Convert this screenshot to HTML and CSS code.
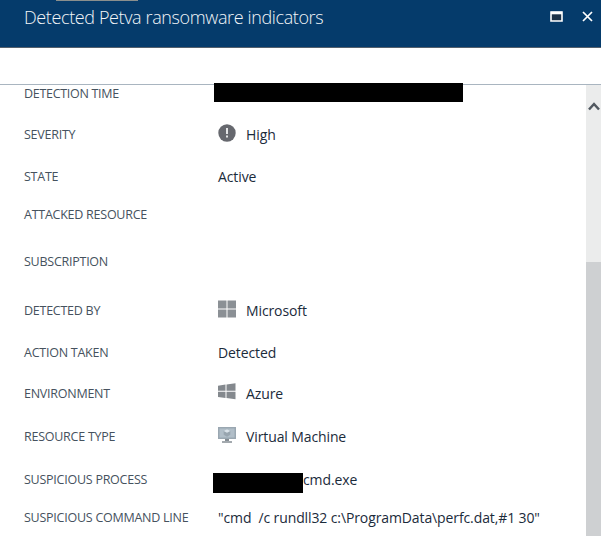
FILE: index.html
```html
<!DOCTYPE html>
<html lang="en">
<head>
<meta charset="utf-8">
<title>Detected Petva ransomware indicators</title>
<link rel="stylesheet" href="styles.css">
</head>
<body>
<div class="blade">
  <header class="header">
    <i class="tab-edge"></i>
    <h1>Detected Petva ransomware indicators</h1>
    <svg class="maximize" width="13" height="11" viewBox="0 0 13 11"><path d="M1 1h11v9H1z" fill="#1c3349" stroke="#fff" stroke-width="1.6"/><path d="M1 2h11" stroke="#fff" stroke-width="2.6"/></svg>
    <svg class="close" width="11" height="11" viewBox="0 0 11 11"><path d="M1 1l9 9M10 1l-9 9" stroke="#fff" stroke-width="1.7"/></svg>
  </header>
  <div class="toolbar"></div>
  <div class="body">
    <dl class="details">
      <div class="row r1"><dt>DETECTION TIME</dt><dd><i class="redacted long"></i></dd></div>
      <div class="row r2"><dt>SEVERITY</dt><dd><svg class="icon" width="18" height="18" viewBox="0 0 18 18"><circle cx="9" cy="9" r="8.7" fill="#66686e"/><path d="M9 4v6M9 11.6v2" stroke="#e4e5e6" stroke-width="2"/></svg>High</dd></div>
      <div class="row r3"><dt>STATE</dt><dd>Active</dd></div>
      <div class="row r4"><dt>ATTACKED RESOURCE</dt><dd></dd></div>
      <div class="row r5"><dt>SUBSCRIPTION</dt><dd></dd></div>
      <div class="row r6"><dt>DETECTED BY</dt><dd><svg class="icon" width="18" height="18" viewBox="0 0 18 18"><path d="M0 0.5h8.5v8H0zM9.5 0.5H18v8H9.5zM0 9.5h8.5v8H0zM9.5 9.5H18v8H9.5z" fill="#8b9095"/></svg>Microsoft</dd></div>
      <div class="row r7"><dt>ACTION TAKEN</dt><dd>Detected</dd></div>
      <div class="row r8"><dt>ENVIRONMENT</dt><dd><svg class="icon" width="18" height="18" viewBox="0 0 18 18"><path d="M0 2.7L7.5 1.6v6.2H0zM8.5 1.5L17.5.2v7.6h-9zM0 8.8h7.5V15L0 13.9zM8.5 8.8h9v7.5l-9-1.3z" fill="#84898e"/></svg>Azure</dd></div>
      <div class="row r9"><dt>RESOURCE TYPE</dt><dd><svg class="icon" width="18" height="18" viewBox="0 0 18 18"><path d="M0 1h18v12H0z" fill="#9aa7b1"/><path d="M1.5 2.5h15v9h-15z" fill="#b1bec8"/><path d="M9 3.2l3.3 1.8v3.8L9 10.7 5.7 8.8V5z" fill="#98a5af"/><path d="M9 3.2L12.3 5 9 6.8 5.7 5z" fill="#dae3ea"/><path d="M7 13h4v2H7zM4 15.2h10v1.5H4z" fill="#858d94"/></svg>Virtual Machine</dd></div>
      <div class="row r10"><dt>SUSPICIOUS PROCESS</dt><dd><i class="redacted short"></i>cmd.exe</dd></div>
      <div class="row r11"><dt>SUSPICIOUS COMMAND LINE</dt><dd>"cmd&nbsp; /c rundll32 c:\ProgramData\perfc.dat,#1 30"</dd></div>
    </dl>
    <div class="scrollbar">
      <svg class="up" width="12" height="10" viewBox="0 0 12 10"><path d="M1 8.5L6 3l5 5.5" fill="none" stroke="#515860" stroke-width="2.5"/></svg>
      <div class="thumb"></div>
    </div>
  </div>
</div>
</body>
</html>
```
FILE: styles.css
```css
* { box-sizing: border-box; }
body { margin: 0; background: #fff; font-family: "Open Sans", "Noto Sans", sans-serif; }
.blade { width: 601px; height: 542px; overflow: hidden; display: flex; flex-direction: column; }
.header { position: relative; height: 48px; flex: none; display: flex; align-items: flex-start; background: #053b6b; border-bottom: 1px solid #55606c; padding-left: 24px; }
.tab-edge { position: absolute; left: 56px; top: 0; width: 82px; height: 1px; background: #8b8f8d; }
h1 { margin: 5px 0 0; width: 526px; font-size: 18px; line-height: 25px; font-weight: 300; color: #f2f5f8; white-space: nowrap; letter-spacing: -0.38px; }
.maximize { flex: none; margin-top: 11px; }
.close { flex: none; margin: 11px 0 0 19px; }
.toolbar { height: 37px; flex: none; border-bottom: 1px solid #a9b5c0; }
.body { display: flex; height: 451px; }
.details { margin: 0; width: 586px; padding-left: 24px; }
.row { display: flex; align-items: center; height: 42px; color: #1b2b3b; }
dt { width: 194px; flex: none; font-size: 12.5px; letter-spacing: -0.25px; color: #46525e; white-space: nowrap; }
dd { margin: 0; display: flex; align-items: center; font-size: 14px; letter-spacing: -0.11px; white-space: nowrap; }
.icon { margin: 0 10px 2px 0; flex: none; }
.redacted { background: #000; flex: none; }
.long { width: 249px; height: 19px; margin-left: -4px; position: relative; top: -1px; }
.short { width: 90px; height: 20px; margin: 7px 0 0 -5px; }
.r1 { height: 16px; }
.r1 dt { letter-spacing: -0.3px; }
.r2 { height: 66px; }
.r3 { height: 18px; }
.r4 { height: 58px; }
.r5 { height: 36px; }
.r6 { height: 62px; }
.r7 { height: 22px; }
.r8 { height: 60px; }
.r9 { height: 26px; }
.r10 { height: 60px; }
.r11 { height: 16px; }
.scrollbar { width: 15px; background: #ebecec; display: flex; flex-direction: column; }
.up { margin: 16px 0 0 2px; flex: none; }
.thumb { margin-top: 151px; height: 274px; flex: none; background: #ced0d2; }
```
